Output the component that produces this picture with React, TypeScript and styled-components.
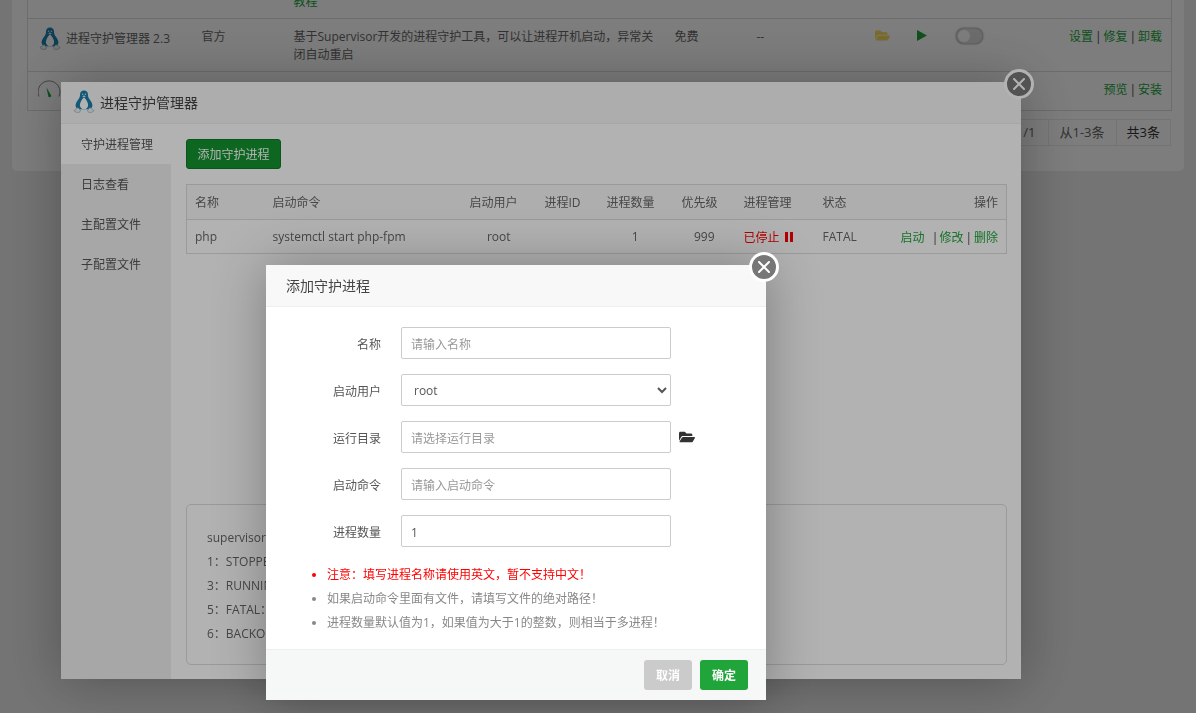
import React from "react";
import styled, { createGlobalStyle } from "styled-components";
import { FaFolderOpen } from "react-icons/fa";

const GlobalStyle = createGlobalStyle`
  html, body {
    margin: 0;
    height: 100%;
    overflow: hidden;
    background: #ececec;
    font-family: "Open Sans", "Noto Sans CJK SC", sans-serif;
    font-size: 12px;
    color: #666;
  }
`;

const Page = styled.div`
  height: 713px;
  overflow: hidden;
  padding: 0 12px;
  box-sizing: border-box;
`;
const Card = styled.div`
  width: 1172px;
  height: 192px;
  margin-top: -21px;
  padding: 0 13px 0 15px;
  box-sizing: border-box;
  background: #fff;
  border-radius: 5px;
`;
const PluginTable = styled.table`
  width: 1144px;
  table-layout: fixed;
  border-collapse: collapse;
  border: 1px solid #ddd;
  td {
    padding: 9px 10px 7px;
    border-top: 1px solid #ddd;
    line-height: 18px;
    vertical-align: top;
  }
`;
const FirstRow = styled.tr`
  td {
    padding-top: 13px;
    padding-bottom: 7px;
  }
`;
const GreenLink = styled.a`
  color: #20a53a;
`;
const Sep = styled.span<{ $wide?: boolean }>`
  display: inline-block;
  width: ${(p) => (p.$wide ? 15 : 10.5)}px;
  padding-left: ${(p) => (p.$wide ? 6 : 0)}px;
  box-sizing: border-box;
  text-align: center;
  color: #444;
`;
const NameCell = styled.div`
  display: flex;
  align-items: center;
  gap: 4px;
  margin: -1px 0;
`;
const IconRow = styled.div`
  display: flex;
  align-items: center;
  height: 15px;
`;
const FolderTint = styled(IconRow)`
  color: #f6d85c;
  font-size: 15px;
`;
const Toggle = styled.div`
  width: 23px;
  height: 12px;
  border-radius: 8px;
  background: #dcdcdc;
  border: 1px solid #ccc;
  box-shadow: 0 0 2px rgba(0, 0, 0, 0.5);
  padding: 1px;
  box-sizing: content-box;
  display: flex;
  align-items: center;
  span {
    width: 12px;
    height: 12px;
    border-radius: 50%;
    background: #fff;
  }
`;
const Ops = styled.td`
  text-align: right;
  padding-right: 9px !important;
`;
const Pager = styled.div`
  display: flex;
  justify-content: flex-end;
  margin-top: 8px;
  font-size: 13px;
  line-height: 25px;
`;
const PagerItem = styled.span<{ $dark?: boolean; $pad: number }>`
  padding: 0 ${(p) => p.$pad}px;
  border: 1px solid #ececec;
  border-left: 0;
  color: ${(p) => (p.$dark ? "#333" : "#666")};
`;

const Overlay = styled.div`
  position: fixed;
  inset: 0;
  background: rgba(0, 0, 0, 0.3);
`;
const Dialog = styled.div<{ $x: number; $y: number; $w: number; $h: number }>`
  position: fixed;
  left: ${(p) => p.$x}px;
  top: ${(p) => p.$y}px;
  width: ${(p) => p.$w}px;
  height: ${(p) => p.$h}px;
  background: #fff;
  box-shadow: 1px 1px 50px rgba(0, 0, 0, 0.3);
  display: flex;
  flex-direction: column;
`;
const DialogTitle = styled.div`
  height: 42px;
  flex: none;
  box-sizing: border-box;
  background: #f8f8f8;
  border-bottom: 1px solid #eee;
  font-size: 14px;
  color: #444;
  display: flex;
  align-items: center;
  padding-bottom: 2px;
`;
const LogoTitle = styled(DialogTitle)`
  padding-left: 11px;
  gap: 4px;
`;
const PlainTitle = styled(DialogTitle)`
  padding-left: 20px;
`;
const Close = styled.button`
  position: absolute;
  top: -13px;
  right: -13px;
  width: 30px;
  height: 30px;
  padding: 0;
  border: 3px solid #fff;
  border-radius: 50%;
  background: #777;
  display: flex;
  align-items: center;
  justify-content: center;
`;

const ManagerBody = styled.div`
  flex: 1;
  display: flex;
  min-height: 0;
`;
const Sidebar = styled.div`
  width: 110px;
  flex: none;
  background: #f0f0f0;
`;
const Tab = styled.div<{ $active?: boolean }>`
  height: 40px;
  line-height: 42px;
  padding-left: 20px;
  color: #555;
  background: ${(p) => (p.$active ? "#fff" : "transparent")};
`;
const Main = styled.div`
  flex: 1;
  padding: 15px 15px 14px;
  display: flex;
  flex-direction: column;
`;
const AddButton = styled.button`
  align-self: flex-start;
  width: 95px;
  height: 30px;
  padding: 0;
  background: #13942e;
  border: 1px solid #0f7a26;
  border-radius: 3px;
  color: #fff;
  font: inherit;
`;
const ProcessTable = styled.table`
  width: 820px;
  margin-top: 15px;
  table-layout: fixed;
  border-collapse: collapse;
  border: 1px solid #ddd;
  th,
  td {
    padding: 0 8px;
    font-weight: 400;
    color: #666;
    text-align: left;
  }
  th {
    height: 34px;
    border-bottom: 1px solid #ddd;
    background: #f9f9f9;
  }
  td {
    height: 33px;
  }
`;
const Cell = styled.td<{ $left?: number; $right?: number; $end?: boolean }>`
  && {
    text-align: ${(p) => (p.$end ? "right" : "left")};
    padding-left: ${(p) => p.$left ?? 8}px;
    padding-right: ${(p) => p.$right ?? 8}px;
  }
`;
const Head = styled.th<{ $left?: number; $right?: number; $end?: boolean }>`
  && {
    text-align: ${(p) => (p.$end ? "right" : "left")};
    padding-left: ${(p) => p.$left ?? 8}px;
    padding-right: ${(p) => p.$right ?? 8}px;
  }
`;
const Stopped = styled.span`
  color: #f00;
  display: inline-flex;
  align-items: center;
  gap: 5px;
`;
const PauseIcon = styled.i`
  display: inline-flex;
  gap: 2px;
  &::before,
  &::after {
    content: "";
    width: 3px;
    height: 10px;
    background: #f00;
  }
`;
const HelpBox = styled.div`
  margin-top: auto;
  height: 161px;
  box-sizing: border-box;
  padding: 21px 20px 19px;
  border: 1px solid #ddd;
  border-radius: 5px;
  line-height: 24px;
  color: #666;
`;

const FormArea = styled.div`
  flex: 1;
  padding-top: 20px;
  display: flex;
  flex-direction: column;
  gap: 15px;
`;
const FormRow = styled.div`
  display: flex;
  align-items: center;
  gap: 20px;
`;
const Label = styled.label`
  width: 115px;
  text-align: right;
  color: #555;
  padding-top: 1px;
`;
const TextInput = styled.input`
  width: 270px;
  height: 32px;
  box-sizing: border-box;
  padding: 2px 9px 0;
  border: 1px solid #ccc;
  border-radius: 2px;
  font: inherit;
  color: #555;
  outline: none;
  &::placeholder {
    color: #999;
  }
`;
const SelectInput = styled.select`
  width: 270px;
  height: 32px;
  box-sizing: border-box;
  padding: 0 8px;
  border: 1px solid #ccc;
  border-radius: 2px;
  background: #fff;
  font: inherit;
  color: #555;
  outline: none;
`;
const PathIcon = styled.span`
  display: flex;
  margin-left: -12px;
  color: #333;
  font-size: 16px;
`;
const Notes = styled.ul`
  margin: 1px 0 0;
  padding: 0 0 14px 61px;
  line-height: 24px;
  color: #888;
  list-style: disc;
`;
const Note = styled.li<{ $warn?: boolean }>`
  color: ${(p) => (p.$warn ? "#f00" : "#888")};
`;
const Footer = styled.div`
  height: 51px;
  flex: none;
  box-sizing: border-box;
  background: #f6f8f8;
  border-top: 1px solid #eee;
  padding: 10px 18px 0 0;
  display: flex;
  justify-content: flex-end;
  gap: 8px;
`;
const FootButton = styled.button<{ $ok?: boolean }>`
  width: 48px;
  height: 30px;
  padding: 0;
  border: 0;
  border-radius: 3px;
  background: ${(p) => (p.$ok ? "#20a53a" : "#cbcbcb")};
  color: #fff;
  font: inherit;
  font-weight: 700;
`;

const Tux = () => (
  <svg width="24" height="24" viewBox="0 0 24 24">
    <path
      d="M12 .5C9.400.5 8 2.400 8 4.800c0 2.100-.5 3.100-1.900 4.900C4.700 11.600 3.400 13.500 3.600 15.700c.2 1.600 1 2.700 2.400 3.500h12c1.400-.8 2.200-1.900 2.400-3.500.2-2.200-1.100-4.100-2.500-6C16.500 7.900 16 6.900 16 4.800 16 2.400 14.600.5 12 .5z"
      fill="#1a7fad"
    />
    <path
      d="M12 7.500c-1.200.8-2.400 2.600-3.300 4.500-.8 1.700-1 3.300-.6 4.600.4 1.100 1.200 1.900 2.200 2.400h3.400c1-.5 1.800-1.300 2.200-2.400.4-1.300.2-2.900-.6-4.600-.9-1.900-2.100-3.700-3.300-4.500z"
      fill="#fff"
    />
    <circle cx="10.600" cy="4.300" r=".8" fill="#cfe6f0" />
    <circle cx="13.400" cy="4.300" r=".8" fill="#cfe6f0" />
    <path d="M10.200 6.300 12 5.600l1.800.7L12 7.500z" fill="#dfe9ee" />
    <path
      d="M2 20.500c.6-.6 2.200-1 3.200-2.400.6-.5 1.400-.2 1.900.5l1.500 2.300c-.6 1-1.800 1.700-3 1.500-1.300-.2-3.100-.8-3.600-1.900zM22 20.500c-.6-.6-2.200-1-3.200-2.400-.6-.5-1.400-.2-1.900.5l-1.500 2.300c.6 1 1.800 1.700 3 1.500 1.300-.2 3.100-.8 3.600-1.900z"
      fill="#f2f4f5"
      stroke="#6c9db3"
      strokeWidth=".6"
    />
  </svg>
);

const Gauge = () => (
  <svg width="24" height="24" viewBox="0 0 24 24">
    <path d="M1 16.500a11 11 0 1 1 20 0" fill="none" stroke="#888" strokeWidth="1" />
    <path d="M8.500 7.500 13.200 15.500a1.600 1.600 0 0 1-2.900 1.100z" fill="#20a53a" />
  </svg>
);

const CloseIcon = () => (
  <svg width="12" height="12" viewBox="0 0 12 12">
    <path d="M1 1l10 10M11 1L1 11" stroke="#fff" strokeWidth="2" strokeLinecap="round" />
  </svg>
);

const PlayIcon = () => (
  <svg width="10" height="11" viewBox="0 0 10 11">
    <path d="M0 0l10 5.500L0 11z" fill="#20a53a" />
  </svg>
);

export default function App() {
  return (
    <>
      <GlobalStyle />
      <Page>
        <Card>
          <PluginTable>
            <colgroup>
              <col width="164" />
              <col width="92" />
              <col width="381" />
              <col width="82" />
              <col width="118" />
              <col width="42" />
              <col width="39" />
              <col width="90" />
              <col width="136" />
            </colgroup>
            <tbody>
              <FirstRow>
                <td />
                <td />
                <td>
                  <GreenLink>教程</GreenLink>
                </td>
                <td colSpan={6} />
              </FirstRow>
              <tr>
                <td>
                  <NameCell>
                    <Tux />
                    进程守护管理器 2.3
                  </NameCell>
                </td>
                <td>官方</td>
                <td>基于Supervisor开发的进程守护工具，可以让进程开机启动，异常关闭自动重启</td>
                <td>免费</td>
                <td>--</td>
                <td>
                  <FolderTint>
                    <FaFolderOpen />
                  </FolderTint>
                </td>
                <td>
                  <IconRow>
                    <PlayIcon />
                  </IconRow>
                </td>
                <td>
                  <Toggle>
                    <span />
                  </Toggle>
                </td>
                <Ops>
                  <GreenLink>设置</GreenLink>
                  <Sep>|</Sep>
                  <GreenLink>修复</GreenLink>
                  <Sep>|</Sep>
                  <GreenLink>卸载</GreenLink>
                </Ops>
              </tr>
              <tr>
                <td>
                  <NameCell>
                    <Gauge />
                  </NameCell>
                </td>
                <td colSpan={7} />
                <Ops>
                  <GreenLink>预览</GreenLink>
                  <Sep>|</Sep>
                  <GreenLink>安装</GreenLink>
                </Ops>
              </tr>
            </tbody>
          </PluginTable>
          <Pager>
            <PagerItem $pad={12}>1/1</PagerItem>
            <PagerItem $pad={11}>从1-3条</PagerItem>
            <PagerItem $pad={10} $dark>共3条</PagerItem>
          </Pager>
        </Card>
      </Page>

      <Overlay />
      <Dialog $x={61} $y={82} $w={960} $h={597}>
        <LogoTitle>
          <Tux />
          进程守护管理器
        </LogoTitle>
        <Close>
          <CloseIcon />
        </Close>
        <ManagerBody>
          <Sidebar>
            <Tab $active>守护进程管理</Tab>
            <Tab>日志查看</Tab>
            <Tab>主配置文件</Tab>
            <Tab>子配置文件</Tab>
          </Sidebar>
          <Main>
            <AddButton>添加守护进程</AddButton>
            <ProcessTable>
              <colgroup>
                <col width="78" />
                <col width="196" />
                <col width="66" />
                <col width="71" />
                <col width="67" />
                <col width="63" />
                <col width="88" />
                <col width="70" />
                <col width="121" />
              </colgroup>
              <thead>
                <tr>
                  <Head $left={8}>名称</Head>
                  <Head>启动命令</Head>
                  <Head $end $right={9} $left={0}>启动用户</Head>
                  <Head $left={18} $right={0}>进程ID</Head>
                  <Head $end $right={10} $left={0}>进程数量</Head>
                  <Head $end $right={10} $left={0}>优先级</Head>
                  <Head $left={16} $right={0}>进程管理</Head>
                  <Head $left={7}>状态</Head>
                  <Head $end>操作</Head>
                </tr>
              </thead>
              <tbody>
                <tr>
                  <Cell $left={8}>php</Cell>
                  <Cell $right={0}>systemctl start php-fpm</Cell>
                  <Cell $end $right={16} $left={0}>root</Cell>
                  <Cell />
                  <Cell $end $right={26} $left={0}>1</Cell>
                  <Cell $end $right={13} $left={0}>999</Cell>
                  <Cell $left={16} $right={0}>
                    <Stopped>
                      已停止
                      <PauseIcon />
                    </Stopped>
                  </Cell>
                  <Cell $left={7}>FATAL</Cell>
                  <Cell $end $left={0}>
                    <GreenLink>启动</GreenLink>
                    <Sep $wide>|</Sep>
                    <GreenLink>修改</GreenLink>
                    <Sep>|</Sep>
                    <GreenLink>删除</GreenLink>
                  </Cell>
                </tr>
              </tbody>
            </ProcessTable>
            <HelpBox>
              supervisor状态说明
              <br />
              1：STOPPED：已停止
              <br />
              3：RUNNING：运行中
              <br />
              5：FATAL：启动失败
              <br />
              6：BACKOFF：启动重试
            </HelpBox>
          </Main>
        </ManagerBody>
      </Dialog>

      <Overlay />
      <Dialog $x={266} $y={265} $w={500} $h={435}>
        <PlainTitle>添加守护进程</PlainTitle>
        <Close>
          <CloseIcon />
        </Close>
        <FormArea>
          <FormRow>
            <Label>名称</Label>
            <TextInput placeholder="请输入名称" />
          </FormRow>
          <FormRow>
            <Label>启动用户</Label>
            <SelectInput defaultValue="root">
              <option value="root">root</option>
            </SelectInput>
          </FormRow>
          <FormRow>
            <Label>运行目录</Label>
            <TextInput placeholder="请选择运行目录" />
            <PathIcon>
              <FaFolderOpen />
            </PathIcon>
          </FormRow>
          <FormRow>
            <Label>启动命令</Label>
            <TextInput placeholder="请输入启动命令" />
          </FormRow>
          <FormRow>
            <Label>进程数量</Label>
            <TextInput defaultValue="1" />
          </FormRow>
          <Notes>
            <Note $warn>注意：填写进程名称请使用英文，暂不支持中文！</Note>
            <Note>如果启动命令里面有文件，请填写文件的绝对路径！</Note>
            <Note>进程数量默认值为1，如果值为大于1的整数，则相当于多进程！</Note>
          </Notes>
        </FormArea>
        <Footer>
          <FootButton>取消</FootButton>
          <FootButton $ok>确定</FootButton>
        </Footer>
      </Dialog>
    </>
  );
}
